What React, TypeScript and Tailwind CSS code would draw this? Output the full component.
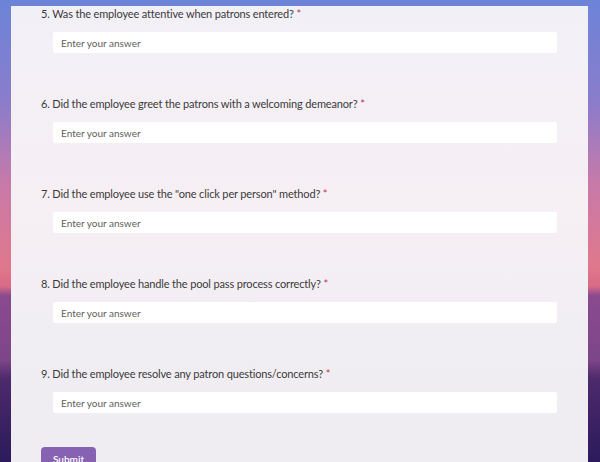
const QUESTIONS = [
  '5. Was the employee attentive when patrons entered?',
  '6. Did the employee greet the patrons with a welcoming demeanor?',
  '7. Did the employee use the "one click per person" method?',
  '8. Did the employee handle the pool pass process correctly?',
  '9. Did the employee resolve any patron questions/concerns?',
];

function Question({ label }: { label: string }) {
  return (
    <div className="flex flex-col">
      <div className="h-[16px] leading-[16px] text-[11px] tracking-[-0.15px] text-[#3b3a39]">
        {label} <span className="text-[#c4314b]">*</span>
      </div>
      <input
        type="text"
        placeholder="Enter your answer"
        className="mt-[10px] ml-[12px] h-[21px] w-[504px] rounded-[2px] bg-white px-[8px] text-[10px] text-[#323130] outline-none placeholder:text-[#605e5c]"
      />
    </div>
  );
}

export default function App() {
  return (
    <div
      className="h-[462px] w-[600px] overflow-hidden bg-[linear-gradient(180deg,#6c84d8_0%,#8a7ccb_22%,#c87aa8_40%,#e0788c_58%,#d86a86_62%,#8a4a8e_64%,#7c4688_78%,#4c2a6c_82%,#2c1a5c_100%)] pl-[11px] pr-[12px] pt-[6px] font-['Lato','Noto_Sans',sans-serif]"
    >
      <div className="h-full bg-[linear-gradient(180deg,#f2f0f7_0%,#f6eff4_45%,#f1eef3_70%,#efedf2_100%)] pl-[30px]">
        <div className="flex flex-col gap-[43px]">
          {QUESTIONS.map((q) => (
            <Question key={q} label={q} />
          ))}
        </div>
        <button className="mt-[34px] h-[24px] rounded-[4px] bg-[#8762b2] px-[12px] text-[10px] font-semibold leading-[24px] text-white">
          Submit
        </button>
      </div>
    </div>
  );
}
